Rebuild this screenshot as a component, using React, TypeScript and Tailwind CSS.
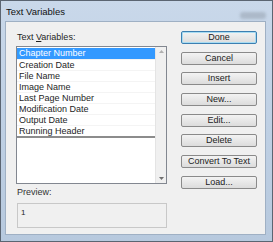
const items = [
  "Chapter Number",
  "Creation Date",
  "File Name",
  "Image Name",
  "Last Page Number",
  "Modification Date",
  "Output Date",
  "Running Header",
];

const buttons = ["Done", "Cancel", "Insert", "New...", "Edit...", "Delete", "Convert To Text", "Load..."];

function DialogButton({ label, primary }: { label: string; primary?: boolean }) {
  return (
    <button
      type="button"
      className={`h-[13px] w-[76px] rounded-[2px] border text-[9px] leading-[11px] text-[#222] bg-gradient-to-b from-[#f3f3f3] to-[#dcdcdc] flex items-center justify-center ${
        primary ? "border-[#3c7fb1] shadow-[inset_0_0_0_1px_#a8dcf2]" : "border-[#8a8a8a]"
      }`}
    >
      {label}
    </button>
  );
}

export default function App() {
  return (
    <div
      className="w-[273px] h-[242px] border border-[#5b6572] bg-gradient-to-b from-[#c9d8ea] via-[#bfd0e4] to-[#b7c9de] flex flex-col text-[#1e1e1e]"
      style={{ fontFamily: '"Liberation Sans", Arial, sans-serif' }}
    >
      {/* title bar */}
      <div className="h-[20px] flex items-center justify-between pl-[5px] pr-[6px]">
        <span className="text-[9.5px] leading-none pt-[2px] text-[#111]">Text Variables</span>
        <div className="w-[26px] h-[7px] mt-[8px] rounded-[3px] bg-[#9aa6b4] opacity-60 blur-[1.5px]" />
      </div>

      {/* client area */}
      <div className="flex-1 ml-[4px] mr-[6px] mb-[6px] border border-[#9fb0c4] bg-[#f0f0f0] flex">
        {/* left column */}
        <div className="pl-[10px] pt-[10px] flex flex-col">
          <div className="text-[9px] leading-[11px] pl-[1px]">
            Text <span className="underline">V</span>ariables:
          </div>
          <div className="mt-[3px] w-[151px] h-[138px] border border-[#828790] bg-white flex">
            <div className="flex-1 pt-[1px] flex flex-col">
              {items.map((item, i) => (
                <div
                  key={item}
                  className={`h-[11px] pl-[2px] text-[9px] leading-[11px] whitespace-nowrap ${
                    i === 0 ? "bg-[#3399ff] text-white" : "border-t border-[#f4f4f4]"
                  } ${i === items.length - 1 ? "border-b-2 border-b-[#8c8c8c] h-[13px]" : ""}`}
                >
                  {item}
                </div>
              ))}
            </div>
            {/* scrollbar */}
            <div className="w-[11px] bg-[#f0f0f0] border-l border-[#e4e4e4] flex flex-col justify-between items-center py-[3px]">
              <svg width="5" height="3" viewBox="0 0 5 3">
                <path d="M0 3 L2.5 0 L5 3 Z" fill="#b0b0b0" />
              </svg>
              <svg width="5" height="3" viewBox="0 0 5 3">
                <path d="M0 0 L2.5 3 L5 0 Z" fill="#707070" />
              </svg>
            </div>
          </div>

          <div className="mt-[3px] text-[9px] leading-[11px] pl-[1px] text-[#333]">Preview:</div>
          <div className="mt-[5px] ml-[1px] w-[150px] h-[25px] border border-[#c8c8c8] bg-[#f0f0f0] px-[3px] pt-[4px] text-[8px] leading-[9px]">
            1
          </div>
        </div>

        {/* right column */}
        <div className="ml-[14px] pt-[9px] flex flex-col gap-[7.7px]">
          {buttons.map((b, i) => (
            <DialogButton key={b} label={b} primary={i === 0} />
          ))}
        </div>
      </div>
    </div>
  );
}
